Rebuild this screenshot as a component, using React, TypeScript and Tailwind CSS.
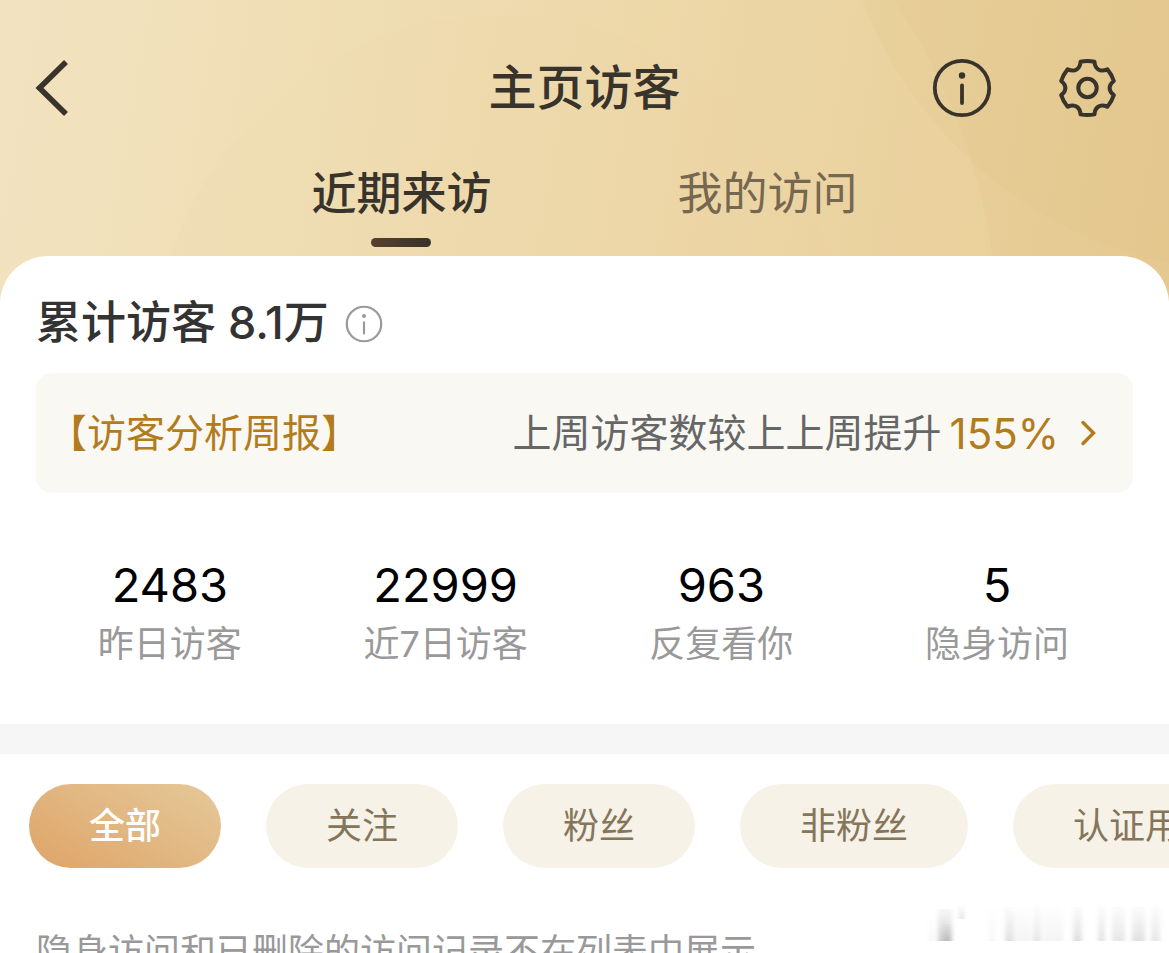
import type { ReactNode } from 'react'

const stats = [
  { value: '2483', label: '昨日访客' },
  { value: '22999', label: '近7日访客' },
  { value: '963', label: '反复看你' },
  { value: '5', label: '隐身访问' },
]

const filters = ['全部', '关注', '粉丝', '非粉丝', '认证用户']

// x, y, width and opacity of each soft streak
const streaks = [
  [5, 16, 5, 0.1], [14, 5, 14, 0.55], [20, 20, 7, 0.4], [35, 1, 5, 0.3], [65, 3, 6, 0.1], [81, 3, 9, 0.32],
  [91, 3, 16, 0.12], [109, 3, 8, 0.26], [119, 3, 20, 0.12], [149, 3, 9, 0.34], [174, 3, 7, 0.3],
  [188, 3, 13, 0.26], [208, 3, 13, 0.32], [227, 3, 9, 0.26],
]

function InfoIcon({ className, stroke }: { className: string; stroke: number }) {
  return (
    <svg viewBox="0 0 60 60" className={className} fill="none" stroke="currentColor" strokeWidth={stroke} aria-hidden="true">
      <circle cx="30" cy="30" r="27.2" />
      <path d="M30 27.5v17.5" strokeLinecap="round" />
      <circle cx="30" cy="17.5" r="3.2" fill="currentColor" stroke="none" />
    </svg>
  )
}

function GearIcon() {
  return (
    <svg viewBox="0 0 60 60" className="size-[60px]" fill="none" stroke="currentColor" strokeWidth="4" strokeLinejoin="round" aria-hidden="true">
      <path d="M23.5 3.8 Q30.5 2 37.5 3.8 C38 10.5 42.5 14.8 50.4 11.4 Q54.8 16.6 56.8 23 C51.2 27.2 51.2 33 56.8 37.2 Q54.8 43.6 50.4 48.8 C42.5 45.4 38 49.6 37.5 56.4 Q30.5 57.8 23.5 56.4 C23 49.6 18.5 45.4 10.6 48.8 Q6.2 43.6 4.2 37.2 C9.8 33 9.8 27.2 4.2 23 Q6.2 16.6 10.6 11.4 C18.5 14.8 23 10.5 23.5 3.8Z" />
      <circle cx="30.5" cy="30" r="9.2" />
    </svg>
  )
}

function HeaderArt() {
  return (
    <svg className="absolute inset-0 size-full" viewBox="0 0 1169 310" preserveAspectRatio="xMaxYMin slice" aria-hidden="true">
      <circle cx="500" cy="360" r="345" fill="#e9cf98" opacity="0.06" />
      <circle cx="398" cy="338" r="600" fill="#f3dfb6" opacity="0.2" />
      <circle cx="1258" cy="-150" r="423" fill="#dfbe7c" opacity="0.14" />
    </svg>
  )
}

function IconButton({ label, children }: { label: string; children: ReactNode }) {
  return (
    <button type="button" aria-label={label} className="block">
      {children}
    </button>
  )
}

export default function App() {
  return (
    <div className="min-h-screen overflow-x-hidden bg-white font-['Inter','Noto_Sans_CJK_SC',sans-serif] text-[#333]">
      <header className="relative bg-linear-100 from-[#f2e4c4] via-[#ecd7a8] to-[#e5c88f] pt-[58px] pb-[54px] text-[#38342b]">
        <HeaderArt />
        <div className="relative grid grid-cols-[1fr_auto_1fr] items-center pl-8 pr-[52px]">
          <IconButton label="返回">
            <svg viewBox="0 0 40 60" className="h-[60px] w-10" fill="none" stroke="currentColor" strokeWidth="5.6" aria-hidden="true">
              <path d="M34 4 7.5 30 34 56" />
            </svg>
          </IconButton>
          <h1 className="pl-5 text-5xl leading-[60px] font-medium">主页访客</h1>
          <div className="flex justify-end gap-[65px]">
            <IconButton label="说明">
              <InfoIcon className="size-[60px]" stroke={3.8} />
            </IconButton>
            <IconButton label="设置">
              <GearIcon />
            </IconButton>
          </div>
        </div>
        <nav className="relative mt-[46px] flex justify-center gap-[186px] text-[45px] leading-[60px]">
          <a href="#recent" aria-current="page" className="flex flex-col items-center font-medium">
            近期来访
            <span className="mt-3.5 h-[9px] w-[60px] rounded-full bg-linear-to-r from-[#56412c] to-[#38322a]" />
          </a>
          <a href="#mine" className="text-[#756750]">我的访问</a>
        </nav>
      </header>

      <main className="relative -mt-[45px] rounded-t-[48px] bg-white pt-[37px]">
        <section>
          <div className="flex items-center gap-4 px-9">
            <h2 className="text-[45px] leading-[60px] font-medium">累计访客 8.1万</h2>
            <button type="button" aria-label="累计访客说明" className="mt-0.5 text-[#999]">
              <InfoIcon className="size-[38px]" stroke={3.4} />
            </button>
          </div>

          <a
            href="#report"
            className="mx-9 mt-5 flex h-[120px] items-center justify-between rounded-2xl bg-[#f9f8f3] pr-9 pl-3 text-[39px] text-[#b27c1c]"
          >
            <span>【访客分析周报】</span>
            <span className="flex items-center">
              <span className="text-[#666]">上周访客数较上上周提升</span>
              <span className="ml-2 text-[42px]">155%</span>
              <svg viewBox="0 0 18 28" className="ml-5 h-7 w-[18px]" fill="none" stroke="currentColor" strokeWidth="3.4" strokeLinecap="round" aria-hidden="true">
                <path d="M4 3.5 14.5 14 4 24.5" />
              </svg>
            </span>
          </a>

          <dl className="mt-[60px] grid grid-cols-4 pr-[34px] pb-14 pl-8 text-center">
            {stats.map((s) => (
              <div key={s.label} className="flex flex-col-reverse gap-[3px]">
                <dt className="text-4xl leading-[48px] text-[#999]">{s.label}</dt>
                <dd className="text-[47px] leading-[64px] text-black">{s.value}</dd>
              </div>
            ))}
          </dl>
        </section>

        <div className="h-[30px] bg-[#f6f6f6]" />

        <section>
          <div className="flex gap-[45px] overflow-hidden pt-[30px] pl-[29px]">
            {filters.map((f, i) => (
              <button
                key={f}
                type="button"
                aria-pressed={i === 0}
                className={`h-[84px] shrink-0 rounded-full px-[60px] text-4xl ${
                  i === 0
                    ? 'bg-linear-30 from-[#dea468] to-[#e4c999] font-medium text-white'
                    : 'bg-[#f6f2e7] text-[#85755a]'
                }`}
              >
                {f}
              </button>
            ))}
          </div>

          <div className="flex items-start justify-between overflow-hidden pt-9 pl-9">
            <p className="pt-6 text-4xl leading-[48px] whitespace-nowrap text-[#999]">隐身访问和已删除的访问记录不在列表中展示</p>
            <svg viewBox="0 0 245 40" className="h-10 w-[245px] shrink-0" aria-hidden="true">
              <defs>
                <linearGradient id="streak" x1="0" y1="0" x2="0" y2="1">
                  <stop offset="0" stopColor="#b8b8b8" stopOpacity="0.2" />
                  <stop offset="1" stopColor="#a0a0a0" />
                </linearGradient>
                <filter id="soft">
                  <feGaussianBlur stdDeviation="2.2 0.6" />
                </filter>
              </defs>
              <g filter="url(#soft)" fill="url(#streak)">
                {streaks.map(([x, y, w, o]) => (
                  <rect key={x} x={x} y={y} width={w} height={x === 35 ? 14 : 37 - y} opacity={o} />
                ))}
              </g>
            </svg>
          </div>
        </section>
      </main>
    </div>
  )
}
